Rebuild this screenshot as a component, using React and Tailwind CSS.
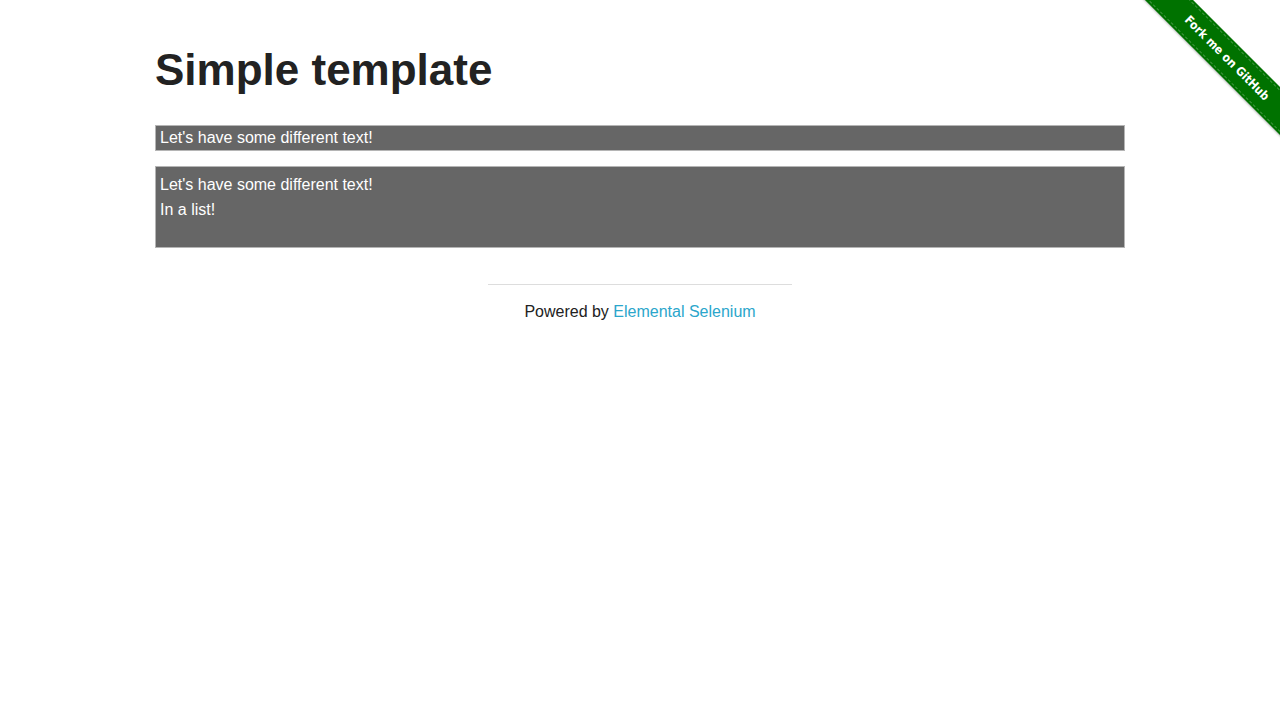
export default function App() {
	return (
		<div className="relative min-h-[720px] bg-white font-['Liberation_Sans',Arial,sans-serif] text-[#222] overflow-hidden">
			{/* Fork ribbon */}
			<div className="absolute top-0 right-0 w-[149px] h-[149px] overflow-hidden">
				<div className="absolute left-[-14px] top-[41px] w-[220px] h-[34px] rotate-45 bg-[#007200] py-[2px] shadow-[0_1px_2px_rgba(0,0,0,0.25)]">
					<div className="h-full border-y border-dashed border-white/25 flex items-center justify-center">
						<span className="text-white text-[12px] font-bold font-['DejaVu_Sans_Condensed','Open_Sans',sans-serif]">
							Fork me on GitHub
						</span>
					</div>
				</div>
			</div>

			<div className="w-[970px] mx-auto pt-[44px]">
				<h1 className="text-[44px] leading-[1.2] font-bold text-[#222]">
					Simple template
				</h1>

				<div className="mt-[28px] border border-[#b5b5b5] bg-[#666] text-white text-[16px] leading-[24px] px-[4px]">
					<span>Let's have some different text!</span>
				</div>

				<div className="mt-[15px] border border-[#b5b5b5] bg-[#666] text-white text-[16px] leading-[25px] px-[4px] pt-[5px] pb-[5px]">
					<ul className="mb-[20px]">
						<li>Let's have some different text!</li>
						<li>In a list!</li>
					</ul>
				</div>
			</div>

			<div className="w-[304px] mx-auto mt-[36px]">
				<hr className="border-0 border-t border-[#ddd]" />
				<div className="mt-[14px] text-center text-[16px] leading-[25px] text-[#222]">
					Powered by <a className="text-[#2ba6cb]">Elemental Selenium</a>
				</div>
			</div>
		</div>
	);
}
